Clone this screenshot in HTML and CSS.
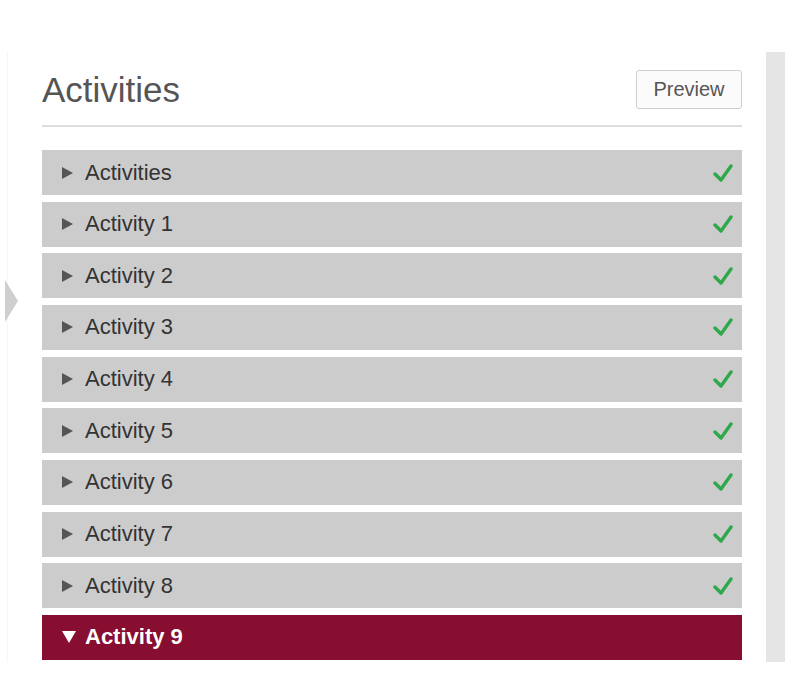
FILE: index.html
```html
<!DOCTYPE html>
<html>
<head>
<meta charset="utf-8">
<link rel="stylesheet" href="styles.css">
</head>
<body>
<div class="page">
  <div class="gutter"><span class="toggle"></span></div>
  <main class="main">
    <div class="header">
      <h1 class="title">Activities</h1>
      <button class="preview">Preview</button>
    </div>
    <ul class="list">
      <li class="row"><span class="arrow"></span><span class="label">Activities</span><svg class="check" viewBox="0 0 20 20"><path d="M2 11 L8 17 L18 3"/></svg></li>
      <li class="row"><span class="arrow"></span><span class="label">Activity 1</span><svg class="check" viewBox="0 0 20 20"><path d="M2 11 L8 17 L18 3"/></svg></li>
      <li class="row"><span class="arrow"></span><span class="label">Activity 2</span><svg class="check" viewBox="0 0 20 20"><path d="M2 11 L8 17 L18 3"/></svg></li>
      <li class="row"><span class="arrow"></span><span class="label">Activity 3</span><svg class="check" viewBox="0 0 20 20"><path d="M2 11 L8 17 L18 3"/></svg></li>
      <li class="row"><span class="arrow"></span><span class="label">Activity 4</span><svg class="check" viewBox="0 0 20 20"><path d="M2 11 L8 17 L18 3"/></svg></li>
      <li class="row"><span class="arrow"></span><span class="label">Activity 5</span><svg class="check" viewBox="0 0 20 20"><path d="M2 11 L8 17 L18 3"/></svg></li>
      <li class="row"><span class="arrow"></span><span class="label">Activity 6</span><svg class="check" viewBox="0 0 20 20"><path d="M2 11 L8 17 L18 3"/></svg></li>
      <li class="row"><span class="arrow"></span><span class="label">Activity 7</span><svg class="check" viewBox="0 0 20 20"><path d="M2 11 L8 17 L18 3"/></svg></li>
      <li class="row"><span class="arrow"></span><span class="label">Activity 8</span><svg class="check" viewBox="0 0 20 20"><path d="M2 11 L8 17 L18 3"/></svg></li>
      <li class="row active"><span class="arrow down"></span><span class="label">Activity 9</span></li>
    </ul>
  </main>
  <aside class="side"></aside>
</div>
</body>
</html>
```
FILE: styles.css
```css
html, body {
  margin: 0;
  padding: 0;
  background: #fff;
  font-family: "Liberation Sans", Arial, sans-serif;
}
.page {
  display: flex;
  align-items: flex-start;
  padding-top: 52px;
}
.gutter {
  width: 34px;
  height: 610px;
  box-sizing: border-box;
  margin-left: 7px;
  padding-top: 228px;
  border-left: 1px solid #f6f6f6;
}
.toggle {
  display: block;
  width: 0;
  height: 0;
  margin-left: -3px;
  border-left: 13px solid #cfcfcf;
  border-top: 21px solid transparent;
  border-bottom: 21px solid transparent;
}
.main {
  width: 700px;
  margin-left: 1px;
}
.header {
  display: flex;
  justify-content: space-between;
  align-items: center;
  padding-top: 18px;
  padding-bottom: 16px;
  border-bottom: 2px solid #dedede;
}
.title {
  margin: 0;
  font-weight: normal;
  font-size: 35px;
  line-height: 39px;
  color: #555;
}
.preview {
  height: 39px;
  width: 106px;
  padding: 0;
  background: #fbfbfb;
  border: 1px solid #cfcfcf;
  border-radius: 3px;
  font-family: "Liberation Sans", Arial, sans-serif;
  font-size: 20px;
  color: #555;
}
.list {
  list-style: none;
  margin: 23px 0 0;
  padding: 0;
  display: flex;
  flex-direction: column;
  gap: 6.67px;
}
.row {
  height: 45px;
  background: #cccccc;
  display: flex;
  align-items: center;
  padding: 0 9px 0 20px;
  font-size: 22px;
  color: #333;
}
.arrow {
  width: 0;
  height: 0;
  border-left: 11px solid #555;
  border-top: 6px solid transparent;
  border-bottom: 6px solid transparent;
  margin-right: 12px;
}
.label {
  flex: 1;
}
.check {
  width: 20px;
  height: 20px;
  fill: none;
  stroke: #2ea84a;
  stroke-width: 3.4;
  stroke-linecap: round;
  stroke-linejoin: round;
}
.row.active {
  background: #870d31;
  color: #fff;
  font-weight: bold;
}
.arrow.down {
  border-left: 7px solid transparent;
  border-right: 7px solid transparent;
  border-top: 12px solid #fff;
  border-bottom: 0;
  margin-right: 9px;
}
.side {
  width: 19px;
  height: 610px;
  margin-left: 24px;
  background: #e5e5e5;
}
```
